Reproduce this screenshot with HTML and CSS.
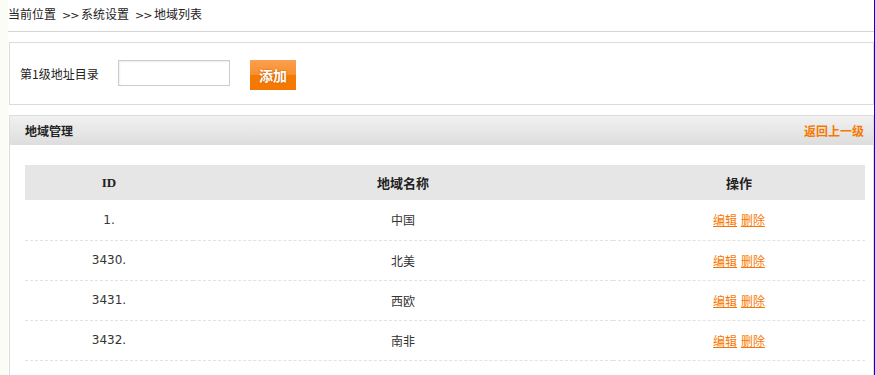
FILE: index.html
```html
<!DOCTYPE html>
<html lang="zh-CN">
<head>
    <meta charset="UTF-8">
    <title>地域列表</title>
    <link rel="stylesheet" href="styles.css">
</head>
<body>
    <div class="main">
        <!-- Breadcrumb -->
        <div class="crumb">当前位置<span class="sep">&gt;&gt;</span>系统设置<span class="sep">&gt;&gt;</span>地域列表</div>

        <!-- Add form -->
        <div class="box add-box">
            <span class="add-label">第1级地址目录</span>
            <input type="text" class="add-input">
            <button class="add-btn">添加</button>
        </div>

        <!-- Region list -->
        <div class="box list-box">
            <div class="box-head">
                <span class="box-title">地域管理</span>
                <a href="#" class="back-link">返回上一级</a>
            </div>
            <table class="list">
                <thead>
                    <tr>
                        <th class="col-id">ID</th>
                        <th class="col-name">地域名称</th>
                        <th class="col-op">操作</th>
                    </tr>
                </thead>
                <tbody>
                    <tr>
                        <td>1.</td>
                        <td>中国</td>
                        <td><a href="#">编辑</a> <a href="#">删除</a></td>
                    </tr>
                    <tr>
                        <td>3430.</td>
                        <td>北美</td>
                        <td><a href="#">编辑</a> <a href="#">删除</a></td>
                    </tr>
                    <tr>
                        <td>3431.</td>
                        <td>西欧</td>
                        <td><a href="#">编辑</a> <a href="#">删除</a></td>
                    </tr>
                    <tr>
                        <td>3432.</td>
                        <td>南非</td>
                        <td><a href="#">编辑</a> <a href="#">删除</a></td>
                    </tr>
                </tbody>
            </table>
        </div>
    </div>
</body>
</html>
```

FILE: styles.css
```css
* {
    margin: 0;
    padding: 0;
    box-sizing: border-box;
}

html {
    background: #fcfcf6;
}

body {
    width: 875px;
    min-height: 375px;
    border-right: 1px solid #0000f0;
    font-family: "DejaVu Sans", "Noto Sans CJK SC", sans-serif;
    font-size: 12px;
    color: #333;
    overflow: hidden;
}

.main {
    margin-left: 8px;
    width: 866px;
    min-height: 375px;
    background: #fff;
}

/* Breadcrumb */
.crumb {
    height: 32px;
    line-height: 28px;
    border-bottom: 1px solid #d4d4d4;
    font-family: "Noto Sans CJK SC", sans-serif;
    color: #222;
}

.crumb .sep {
    display: inline-block;
    width: 14px;
    margin: 0 5px 0 6px;
    font-family: "DejaVu Sans", sans-serif;
    font-size: 11px;
    letter-spacing: -1px;
}

/* Boxes */
.box {
    margin-left: 1px;
    border: 1px solid #dcdcdc;
}

.add-box {
    margin-top: 10px;
    height: 63px;
    display: flex;
    align-items: center;
    padding: 0 0 0 10px;
}

.add-label {
    width: 98px;
    font-family: "Noto Sans CJK SC", sans-serif;
    color: #222;
}

.add-input {
    width: 112px;
    height: 26px;
    border: 1px solid #ccc;
    box-shadow: inset 1px 1px 2px #eee;
    margin-top: -2px;
}

.add-btn {
    margin-left: 20px;
    width: 46px;
    height: 30px;
    border: none;
    background: linear-gradient(#faa04e, #f7902f 50%, #f57a05 51%, #f47800);
    color: #fff;
    font-family: "Noto Sans CJK SC", sans-serif;
    font-size: 14px;
    font-weight: bold;
    text-shadow: 0 0 2px #c05a00;
    margin-top: 2px;
}

.list-box {
    margin-top: 10px;
    border-bottom: none;
    padding-bottom: 20px;
}

.box-head {
    height: 29px;
    background: linear-gradient(#f1f1f1, #dddddd);
    display: flex;
    justify-content: space-between;
    align-items: center;
    padding: 0 9px 0 15px;
    font-family: "Noto Sans CJK SC", sans-serif;
    font-weight: bold;
}

.box-title {
    color: #222;
}

.back-link {
    color: #f77800;
    text-decoration: none;
}

/* Table */
.list {
    margin: 20px 0 0 15px;
    width: 840px;
    border-collapse: collapse;
    text-align: center;
}

.list th {
    height: 35px;
    background: #e6e6e6;
    font-family: "Liberation Serif", "Noto Sans CJK SC", serif;
    font-size: 13px;
    font-weight: bold;
    color: #222;
}

.col-id {
    width: 168px;
}

.col-name {
    width: 420px;
}

.list td {
    height: 40px;
    border-bottom: 1px dashed #e2e2e2;
    color: #333;
}

.list td a {
    color: #f77800;
    font-family: "Noto Sans CJK SC", sans-serif;
}
```
